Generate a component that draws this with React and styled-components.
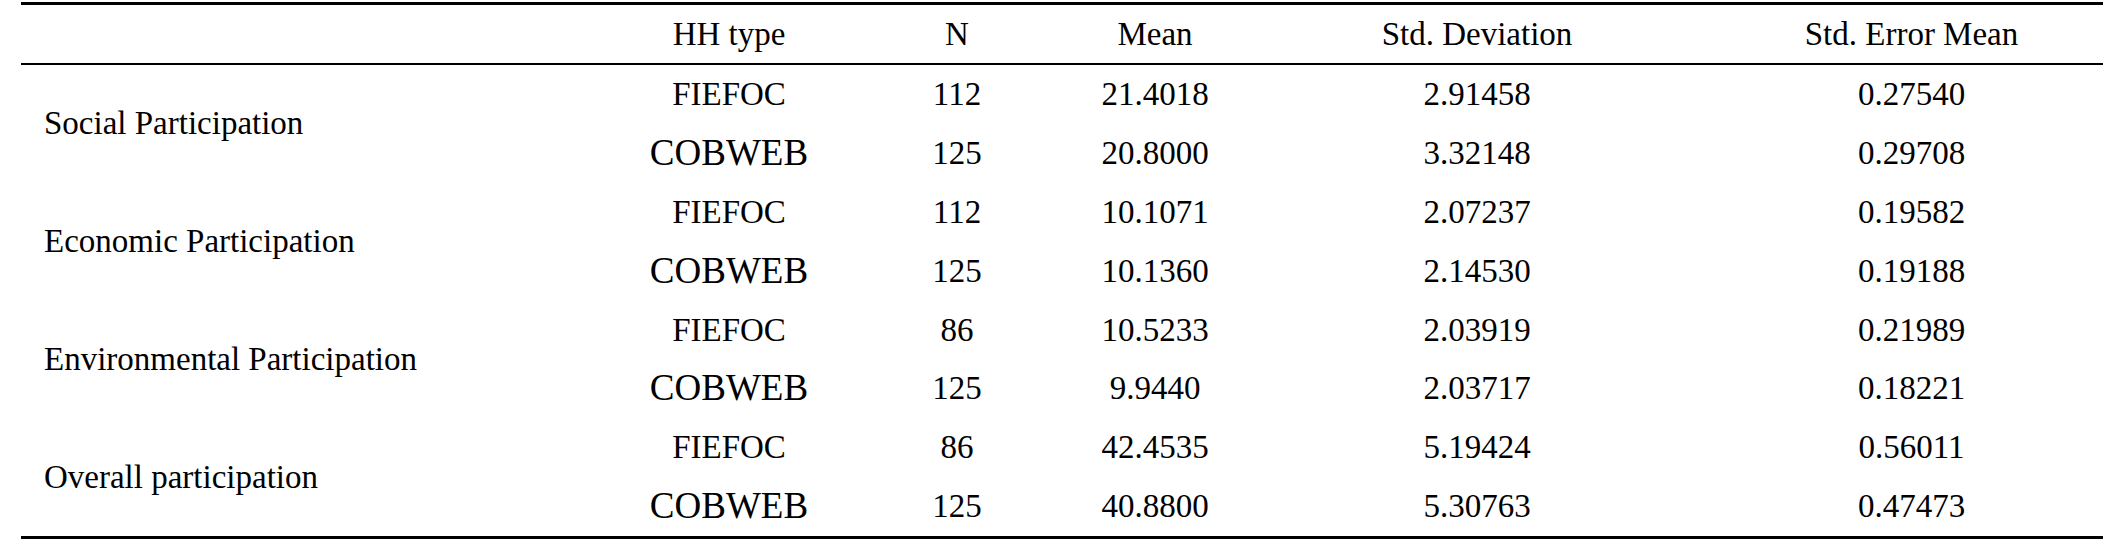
import React from 'react';
import styled, { createGlobalStyle } from 'styled-components'

const GlobalStyle = createGlobalStyle`
body {
  margin: 0;
  background: #FFFFFF;
  color: #000000;
}
`

const PageWrapper = styled.div`
width: 2110px;
padding: 2px 7px 0 21px;
box-sizing: border-box;
font-family: "Liberation Serif", "Times New Roman", serif;
`

const StatsTable = styled.div`
display: grid;
grid-template-columns: 599px 218px 238px 158px 486px 383px;
grid-template-rows: 60px repeat(8, 58.875px);
border-top: 3px solid #000;
border-bottom: 3px solid #000;
`

const HeaderCell = styled.div`
border-bottom: 2px solid #000;
font-size: 33px;
line-height: 58px;
text-align: center;
white-space: nowrap;
`

const LabelCell = styled.div`
grid-row: span 2;
display: flex;
align-items: center;
padding-left: 23px;
font-size: 33px;
white-space: nowrap;
`

const TypeCell = styled.div`
grid-column: 2;
font-size: ${props => props.$large ? '37px' : '33px'};
line-height: 58.875px;
text-align: center;
white-space: nowrap;
`

const ValueCell = styled.div`
font-size: 33px;
line-height: 58.875px;
text-align: center;
white-space: nowrap;
`

const headers = ['', 'HH type', 'N', 'Mean', 'Std. Deviation', 'Std. Error Mean']

const groups = [
  {
    label: 'Social Participation',
    rows: [
      ['FIEFOC', '112', '21.4018', '2.91458', '0.27540'],
      ['COBWEB', '125', '20.8000', '3.32148', '0.29708']
    ]
  },
  {
    label: 'Economic Participation',
    rows: [
      ['FIEFOC', '112', '10.1071', '2.07237', '0.19582'],
      ['COBWEB', '125', '10.1360', '2.14530', '0.19188']
    ]
  },
  {
    label: 'Environmental Participation',
    rows: [
      ['FIEFOC', '86', '10.5233', '2.03919', '0.21989'],
      ['COBWEB', '125', '9.9440', '2.03717', '0.18221']
    ]
  },
  {
    label: 'Overall participation',
    rows: [
      ['FIEFOC', '86', '42.4535', '5.19424', '0.56011'],
      ['COBWEB', '125', '40.8800', '5.30763', '0.47473']
    ]
  }
]

export default function App () {
  return <PageWrapper>
    <GlobalStyle />
    <StatsTable>
      {headers.map((h, i) => <HeaderCell key={'h' + i}>{h}</HeaderCell>)}
      {groups.map(group => group.rows.map((row, r) => <React.Fragment key={group.label + r}>
        {r === 0 && <LabelCell>{group.label}</LabelCell>}
        <TypeCell $large={row[0] === 'COBWEB'}>{row[0]}</TypeCell>
        {row.slice(1).map((v, c) => <ValueCell key={c}>{v}</ValueCell>)}
      </React.Fragment>))}
    </StatsTable>
  </PageWrapper>
}
